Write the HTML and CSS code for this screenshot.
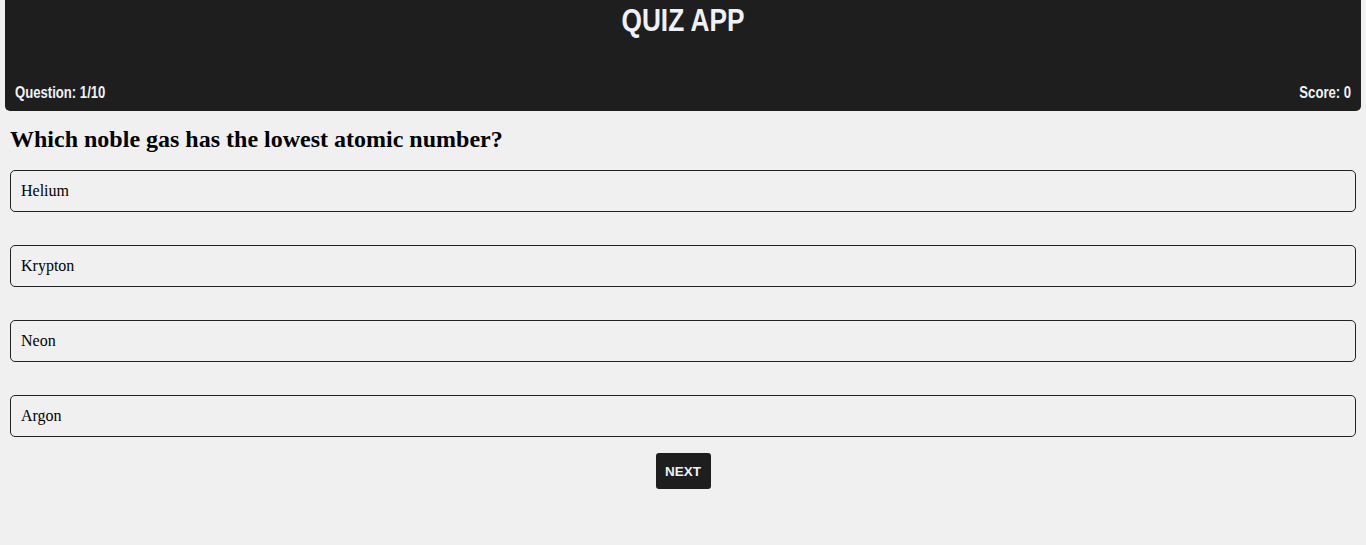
FILE: index.html
```html
<!DOCTYPE html>
<html>
<head>
<meta charset="utf-8">
<link rel="stylesheet" href="styles.css">
</head>
<body>
<header class="header">
  <h1 class="title"><span class="narrow narrow-center">QUIZ APP</span></h1>
  <div class="stats">
    <span class="narrow narrow-left">Question: 1/10</span>
    <span class="narrow narrow-right">Score: 0</span>
  </div>
</header>
<main class="quiz">
  <h2 class="question">Which noble gas has the lowest atomic number?</h2>
  <div class="options">
    <div class="option">Helium</div>
    <div class="option">Krypton</div>
    <div class="option">Neon</div>
    <div class="option">Argon</div>
  </div>
  <div class="actions">
    <button class="next">NEXT</button>
  </div>
</main>
</body>
</html>
```
FILE: styles.css
```css
html, body {
  margin: 0;
  padding: 0;
  background: #f0f0f0;
}
body {
  font-family: "Liberation Serif", "Times New Roman", serif;
  color: #000;
}
.header {
  margin: 0 5px;
  height: 111px;
  box-sizing: border-box;
  background: #1e1e1e;
  border-radius: 0 0 5px 5px;
  padding: 0 10px 9px;
  display: flex;
  flex-direction: column;
  justify-content: space-between;
  color: #eef2f8;
  font-family: "Liberation Sans", Arial, sans-serif;
  font-weight: bold;
}
.narrow {
  display: inline-block;
  transform: scaleX(0.82);
}
.narrow-center { transform-origin: center; }
.narrow-left { transform-origin: left center; }
.narrow-right { transform-origin: right center; }
.title {
  margin: 0;
  text-align: center;
  font-size: 32px;
  line-height: 40px;
}
.stats {
  display: flex;
  justify-content: space-between;
  font-size: 16px;
  line-height: 18px;
}
.quiz {
  padding: 0 10px;
}
.question {
  margin: 14px 0 17px;
  font-size: 24px;
  line-height: 28px;
}
.options {
  display: flex;
  flex-direction: column;
  gap: 33px;
}
.option {
  height: 42px;
  box-sizing: border-box;
  border: 1px solid #222;
  border-radius: 5px;
  padding: 0 10px;
  display: flex;
  align-items: center;
  font-size: 16px;
}
.actions {
  display: flex;
  justify-content: center;
  margin-top: 16px;
}
.next {
  width: 55px;
  height: 36px;
  background: #1e1e1e;
  color: #eef2f8;
  border: none;
  border-radius: 3px;
  font-family: "Liberation Sans", Arial, sans-serif;
  font-weight: bold;
  font-size: 13.5px;
  padding: 0;
}
```
